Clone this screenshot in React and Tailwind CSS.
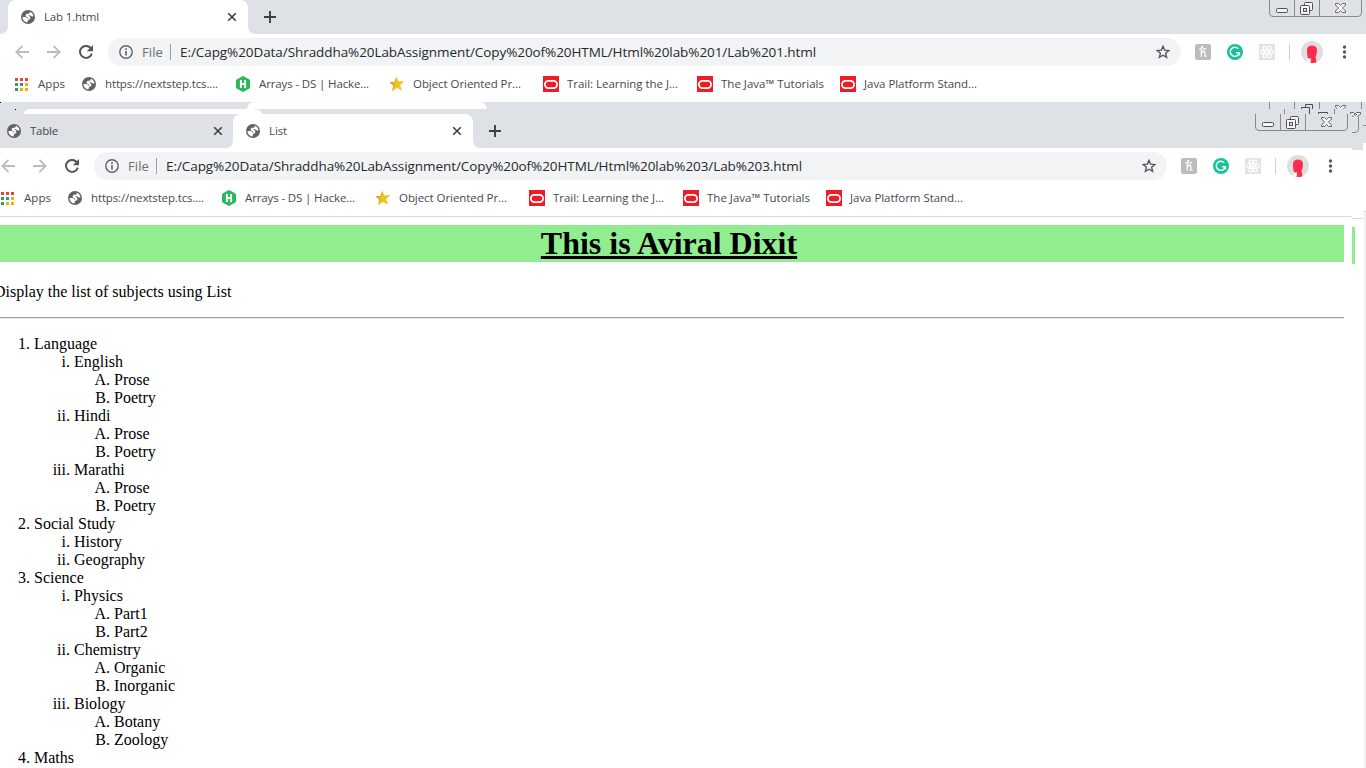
import { useLayoutEffect, useRef, useState } from "react";

function Fit({ width, className, children }) {
  const ref = useRef(null);
  const [spacing, setSpacing] = useState(0);
  useLayoutEffect(() => {
    const natural = ref.current.getBoundingClientRect().width;
    setSpacing((width - natural) / ref.current.textContent.length);
  }, [width]);
  return (
    <span ref={ref} className={`shrink-0 whitespace-pre ${className}`} style={{ letterSpacing: `${spacing}px` }}>
      {children}
    </span>
  );
}

function Globe() {
  return (
    <svg className="h-3.5 w-3.5 shrink-0" viewBox="0 0 14 14">
      <circle cx="7" cy="7" r="7" fill="#5f6368" />
      <path d="M1.500 7H4.200C5.800 7 6 8.600 7.800 8.700V9.800C6.500 10.200 6.900 11.300 6.400 12.400C3.600 12.200 1.500 9.900 1.500 7Z" fill="#fff" />
      <path d="M8.800 1.700C11 2.500 12.300 4.200 12.500 6.300C11.500 6.900 10.300 6.600 9.500 5.800C9 5.300 8 5.200 7.300 5.500C8.800 6.300 9.600 7.200 9.300 8.600C9 9.500 8 9.900 7.200 9.600L7.600 8.300C6.600 7.200 5 7.300 4.600 5.800C4.500 4.300 5.500 3.800 6.900 3.800C8.300 3.800 8.800 3 8.800 1.700Z" fill="#fff" />
    </svg>
  );
}

function Hacker() {
  return (
    <svg className="h-4 w-3.5 shrink-0" viewBox="0 0 14 16">
      <path d="M6 .4Q7 -.2 8 .4L13 3.2Q14 3.8 14 4.8V11.2Q14 12.2 13 12.8L8 15.6Q7 16.2 6 15.6L1 12.8Q0 12.2 0 11.2V4.8Q0 3.8 1 3.2Z" fill="#2ab859" />
      <path d="M4.900 4V12M9.100 4V12M4.900 8H9.100" stroke="#fff" strokeWidth="1.900" fill="none" />
      <path d="M3.500 5.200L4.900 3.500L6.300 5.200ZM7.700 10.800L9.100 12.500L10.500 10.800Z" fill="#fff" />
    </svg>
  );
}

function GoldStar() {
  return (
    <svg className="h-4 w-4 shrink-0" viewBox="0 0 16 16">
      <path d="M7.300 .800L9.400 5.400L15.200 5.100L11 9.300L13.200 14.800L8 11.800L3 15.400L4.500 9.500L.400 6.300L5.600 6Z" fill="#f4c01c" />
      <path d="M7.300 .800L5.600 6L.400 6.300L4.500 9.500L3 15.400L5.600 9.200L2.800 7L6.500 6.600Z" fill="#b98227" opacity=".7" />
    </svg>
  );
}

function Oracle() {
  return (
    <svg className="h-4 w-4 shrink-0" viewBox="0 0 16 16">
      <path d="M0 0H16V16H0Z" fill="#ee1c25" />
      <rect x="1.900" y="4.900" width="12.200" height="7.200" rx="3.600" fill="none" stroke="#fff" strokeWidth="1.800" />
    </svg>
  );
}

function Apps() {
  return (
    <svg className="h-[13px] w-[13px] shrink-0" viewBox="0 0 13 13">
      <path d="M0 0H3V3H0ZM5 0H8V3H5ZM10 0H13V3H10Z" fill="#ea4335" />
      <path d="M0 5H3V8H0ZM0 10H3V13H0Z" fill="#34a04f" />
      <path d="M5 5H8V8H5Z" fill="#1a8cf0" />
      <path d="M10 5H13V8H10ZM5 10H8V13H5ZM10 10H13V13H10Z" fill="#f9ab00" />
    </svg>
  );
}

function Close() {
  return (
    <svg className="h-2.5 w-2.5 shrink-0" viewBox="0 0 10 10">
      <path d="M1.200 1.200L8.800 8.800M8.800 1.200L1.200 8.800" stroke="#3c4043" strokeWidth="1.600" />
    </svg>
  );
}

function Flare({ right }) {
  return (
    <svg className={`absolute bottom-0 h-2 w-2 ${right ? "-right-2 -scale-x-100" : "-left-2"}`} viewBox="0 0 8 8">
      <path d="M8 0V8H0C5 8 8 5 8 0Z" fill="#fff" />
    </svg>
  );
}

function Tab({ title, width, active }) {
  return (
    <div className={`relative flex h-[34px] shrink-0 items-center rounded-t-lg pl-[13px] ${active ? "w-[240px] bg-white pr-[11px]" : "w-[239px] pr-2.5"}`}>
      {active && <Flare />}
      {active && <Flare right />}
      <Globe />
      <Fit width={width} className="ml-[9px] text-[11.5px] text-[#45494d]">{title}</Fit>
      <span className="grow" />
      <Close />
    </div>
  );
}

function Controls() {
  return (
    <svg className="h-[18px] w-[94px] shrink-0" viewBox="0 0 94 18" fill="none">
      <path d="M1.500 0V13Q1.500 16.500 5 16.500H90Q93.500 16.500 93.500 13V0M26.500 0V16M51.500 0V16" stroke="#85888c" />
      <rect x="8.500" y="8.500" width="11" height="4" rx="1" stroke="#4c4f55" fill="#f4f5f6" />
      <rect x="36.500" y="2.500" width="8" height="8" rx="1" stroke="#4c4f55" fill="#f4f5f6" />
      <rect x="32.500" y="5.500" width="9" height="9" rx="1" stroke="#4c4f55" fill="#f4f5f6" />
      <rect x="35.500" y="8.500" width="3" height="3" stroke="#4c4f55" fill="#dee1e6" />
      <path d="M67.500 3.500H70.500L72.500 5.500L74.500 3.500H77.500V5L74.500 8L77.500 11V12.500H74.500L72.500 10.500L70.500 12.500H67.500V11L70.500 8L67.500 5Z" stroke="#62656a" fill="#f4f5f6" />
    </svg>
  );
}

function Toolbar({ url }) {
  return (
    <div className="flex h-9 items-center bg-white pl-[15px]">
      <svg className="h-3.5 w-3.5 shrink-0" viewBox="0 0 14 14" fill="none" stroke="#babcbe" strokeWidth="1.800">
        <path d="M14 7H1.500M7.500 .800L1.300 7L7.500 13.200" />
      </svg>
      <svg className="ml-[18px] h-3.5 w-3.5 shrink-0" viewBox="0 0 14 14" fill="none" stroke="#babcbe" strokeWidth="1.800">
        <path d="M0 7H12.500M6.500 .800L12.700 7L6.500 13.200" />
      </svg>
      <svg className="ml-[18px] h-3.5 w-3.5 shrink-0" viewBox="0 0 14 14" fill="none">
        <path d="M11.600 3A6 6 0 1 0 12.800 8.600" stroke="#54585c" strokeWidth="2" />
        <path d="M14 0V6.200H7.800Z" fill="#54585c" />
      </svg>
      <div className="ml-[15px] flex h-7 w-[1073px] shrink-0 items-center rounded-full bg-[#f1f3f4] pl-[11px] pr-[11px]">
        <svg className="h-3.5 w-3.5 shrink-0" viewBox="0 0 14 14" fill="none" stroke="#5f6368">
          <circle cx="7" cy="7" r="6.200" strokeWidth="1.400" />
          <path d="M7 6V10.600M7 3.300V4.900" strokeWidth="1.600" />
        </svg>
        <Fit width={21} className="ml-[9px] text-[13px] text-[#6b6f73]">File</Fit>
        <span className="ml-[7px] h-4 w-px bg-[#9a9da1]" />
        <Fit width={636} className="ml-[9px] text-[13.5px] text-[#27292c]">{url}</Fit>
        <span className="grow" />
        <svg className="h-3.5 w-3.5 shrink-0" viewBox="0 0 14 14" fill="none" stroke="#55595d" strokeWidth="1.400">
          <path d="M7 1.300L8.600 5.100L12.800 5.500L9.600 8.200L10.600 12.400L7 10.200L3.400 12.400L4.400 8.200L1.200 5.500L5.400 5.100Z" />
        </svg>
      </div>
      <svg className="ml-3.5 h-4 w-4 shrink-0" viewBox="0 0 16 16" fill="none">
        <rect width="16" height="16" rx="2" fill="#bcbcbc" />
        <path d="M4.200 5.200Q7 5.400 7.600 3.200Q7.800 2.200 6.800 2.600Q6 3.500 6.400 12.800M6.500 9Q8.500 6 9.600 7.600Q10.200 9 9.700 12Q10 13 11.600 11.700M7.500 5Q9.500 5.400 11 4.200" stroke="#fff" strokeWidth="1.200" />
      </svg>
      <svg className="ml-4 h-4 w-4 shrink-0" viewBox="0 0 16 16" fill="none">
        <circle cx="8" cy="8" r="8" fill="#15c39a" />
        <path d="M11.300 4.700A4.600 4.600 0 1 0 12.400 8.700H9M12.400 8.700V11.500" stroke="#fff" strokeWidth="1.400" />
      </svg>
      <svg className="ml-4 h-4 w-4 shrink-0" viewBox="0 0 16 16" fill="none">
        <path d="M0 0H16V16H0Z" fill="#e2e2e2" />
        <g stroke="#fff" strokeWidth="1.200">
          <ellipse cx="8" cy="8" rx="6.500" ry="2.500" />
          <ellipse cx="8" cy="8" rx="6.500" ry="2.500" transform="rotate(60 8 8)" />
          <ellipse cx="8" cy="8" rx="6.500" ry="2.500" transform="rotate(120 8 8)" />
        </g>
        <circle cx="8" cy="8" r="1.500" fill="#fff" />
      </svg>
      <span className="ml-3.5 h-4 w-px shrink-0 bg-[#ced0d3]" />
      <svg className="ml-[11px] h-[22px] w-[22px] shrink-0" viewBox="0 0 22 22">
        <circle cx="11" cy="11" r="11" fill="#dedede" />
        <path d="M6 9Q6 4.500 11 4.500Q16 4.500 16 9.500Q16 13.500 14.600 15.500L15.500 21.300Q12 22.500 9.500 21.800L10.200 17.500H7.500Q6 16 6 9Z" fill="#ff2b4e" />
        <path d="M6.500 17.800H9.800L9.200 21.600L6.300 20.800Z" fill="#fff" />
      </svg>
      <svg className="ml-[19px] h-3.5 w-[5px] shrink-0" viewBox="0 0 5 14" fill="#55595d">
        <circle cx="2.500" cy="2" r="1.700" />
        <circle cx="2.500" cy="7" r="1.700" />
        <circle cx="2.500" cy="12" r="1.700" />
      </svg>
    </div>
  );
}

function Bookmark({ icon, width, className, children }) {
  return (
    <div className={`flex shrink-0 items-center ${className}`}>
      {icon}
      <Fit width={width} className="text-[11.5px] text-[#45494d]">{children}</Fit>
    </div>
  );
}

function Bookmarks() {
  return (
    <div className="flex h-8 items-center bg-white pb-1 pl-[15px]">
      <Bookmark icon={<Apps />} width={27} className="gap-2.5">Apps</Bookmark>
      <Bookmark icon={<Globe />} width={113} className="ml-[17px] gap-[9px]">https://nextstep.tcs....</Bookmark>
      <Bookmark icon={<Hacker />} width={110} className="ml-[18px] gap-[9px]">Arrays - DS | Hacke...</Bookmark>
      <Bookmark icon={<GoldStar />} width={108} className="ml-5 gap-2">Object Oriented Pr...</Bookmark>
      <Bookmark icon={<Oracle />} width={111} className="ml-[22px] gap-2">Trail: Learning the J...</Bookmark>
      <Bookmark icon={<Oracle />} width={103} className="ml-[19px] gap-2">The Java™ Tutorials</Bookmark>
      <Bookmark icon={<Oracle />} width={113} className="ml-4 gap-2">Java Platform Stand...</Bookmark>
    </div>
  );
}

function Chrome({ tabs, url }) {
  return (
    <header className="w-[1366px] shrink-0 overflow-hidden font-['Open_Sans','Noto_Sans',sans-serif] leading-4">
      <div className="flex h-[34px] items-start bg-[#dee1e6] pl-2 pr-[4px]">
        {tabs.map((tab) => (
          <Tab key={tab.title} {...tab} />
        ))}
        <svg className="ml-4 mt-[11px] h-3 w-3 shrink-0" viewBox="0 0 12 12">
          <path d="M6 0V12M0 6H12" stroke="#3c4043" strokeWidth="1.900" />
        </svg>
        <span className="grow" />
        <Controls />
      </div>
      <Toolbar url={url} />
      <Bookmarks />
    </header>
  );
}

function Remnants() {
  return (
    <svg className="block h-3 w-[1366px] bg-[#dee1e6]" viewBox="0 0 1366 12" fill="none">
      <path d="M0 0H1V1H0ZM15 7H16V8H15Z" fill="#000" />
      <path d="M247 7Q248 0 255 0H479Q486 0 487 7Z" fill="#fff" />
      <path d="M24 12Q25 7 30 7H254Q260 7 262 12Z" fill="#fff" />
      <path d="M1269.500 0V7M1294.500 0V7M1319.500 0V7M1361.500 0V7M1284.500 7V12M1334.500 7V12" stroke="#85888c" />
      <path d="M1305.500 5V2.500H1312.500V7M1301.500 7V5.500H1309.500V12M1318.500 12V10.500H1327.500V12" stroke="#4c4f55" />
      <path d="M1337.500 6.500L1335.500 5V3.500H1338.500L1340.500 5.500L1342.500 3.500H1345.500V5L1343.500 6.500M1350.500 12V10.500H1353.500L1355 12L1356.500 10.500H1360.500V12" stroke="#62656a" fill="#f4f5f6" />
    </svg>
  );
}

function RightEdge() {
  return (
    <>
      <div className="flex w-[11px] shrink-0 flex-col">
        <svg className="h-9 w-[11px] shrink-0 bg-[#dee1e6]" viewBox="0 0 11 36" fill="none">
          <path d="M0 1.500L1.500 3M2 0L3.500 1.500L5 0M8.500 0L5.500 3" stroke="#62656a" />
          <path d="M6.500 3V15Q6.500 18.500 3 18.500H0" stroke="#85888c" />
        </svg>
        <div className="mt-[68px] h-px shrink-0 bg-[#d7d9dc]" />
        <div className="mt-2 h-[37px] w-[3px] shrink-0 bg-[#90ee90]" />
      </div>
      <div className="flex w-[3px] shrink-0 flex-col">
        <div className="h-[29px] bg-[#dee1e6] pt-[11px]">
          <div className="h-px bg-[#85888c]" />
        </div>
        <div className="mt-[68px] h-px bg-[#d7d9dc]" />
        <div className="ml-px grow bg-[#f1f1f1]" />
      </div>
    </>
  );
}

const parts = (...names) => names.map((name) => ({ name }));
const subjects = [
  {
    name: "Language",
    items: [
      { name: "English", items: parts("Prose", "Poetry") },
      { name: "Hindi", items: parts("Prose", "Poetry") },
      { name: "Marathi", items: parts("Prose", "Poetry") },
    ],
  },
  { name: "Social Study", items: parts("History", "Geography") },
  {
    name: "Science",
    items: [
      { name: "Physics", items: parts("Part1", "Part2") },
      { name: "Chemistry", items: parts("Organic", "Inorganic") },
      { name: "Biology", items: parts("Botany", "Zoology") },
    ],
  },
  { name: "Maths" },
];
const markers = ["list-decimal", "list-[lower-roman]", "list-[upper-alpha]"];

function SubjectList({ items, level = 0 }) {
  return (
    <ol className={`pl-10 ${markers[level]}`}>
      {items.map((item) => (
        <li key={item.name}>
          {item.name}
          {item.items && <SubjectList items={item.items} level={level + 1} />}
        </li>
      ))}
    </ol>
  );
}

export default function App() {
  return (
    <div className="flex h-[768px] w-[1366px] flex-col overflow-hidden bg-white">
      <Chrome
        tabs={[{ title: "Lab 1.html", width: 55, active: true }]}
        url="E:/Capg%20Data/Shraddha%20LabAssignment/Copy%20of%20HTML/Html%20lab%201/Lab%201.html"
      />
      <Remnants />
      <div className="flex h-[654px] shrink-0 overflow-hidden">
        <div className="-ml-3.5 w-[1366px] shrink-0">
          <Chrome
            tabs={[{ title: "Table", width: 28 }, { title: "List", width: 18, active: true }]}
            url="E:/Capg%20Data/Shraddha%20LabAssignment/Copy%20of%20HTML/Html%20lab%203/Lab%203.html"
          />
          <div className="h-px bg-[#d7d9dc]" />
          <main className="px-2 pt-2 font-['Liberation_Serif',serif] text-[16px] leading-[18px] text-black">
            <h1 className="h-[37px] bg-[#90ee90] text-center text-[32px] font-bold leading-[37px] underline">This is Aviral Dixit</h1>
            <p className="mt-[21px]">Display the list of subjects using List</p>
            <hr className="mb-4 mt-4 h-0.5 border-b border-t border-b-[#eeeeee] border-t-[#9a9a9a]" />
            <SubjectList items={subjects} />
          </main>
        </div>
        <RightEdge />
      </div>
    </div>
  );
}
